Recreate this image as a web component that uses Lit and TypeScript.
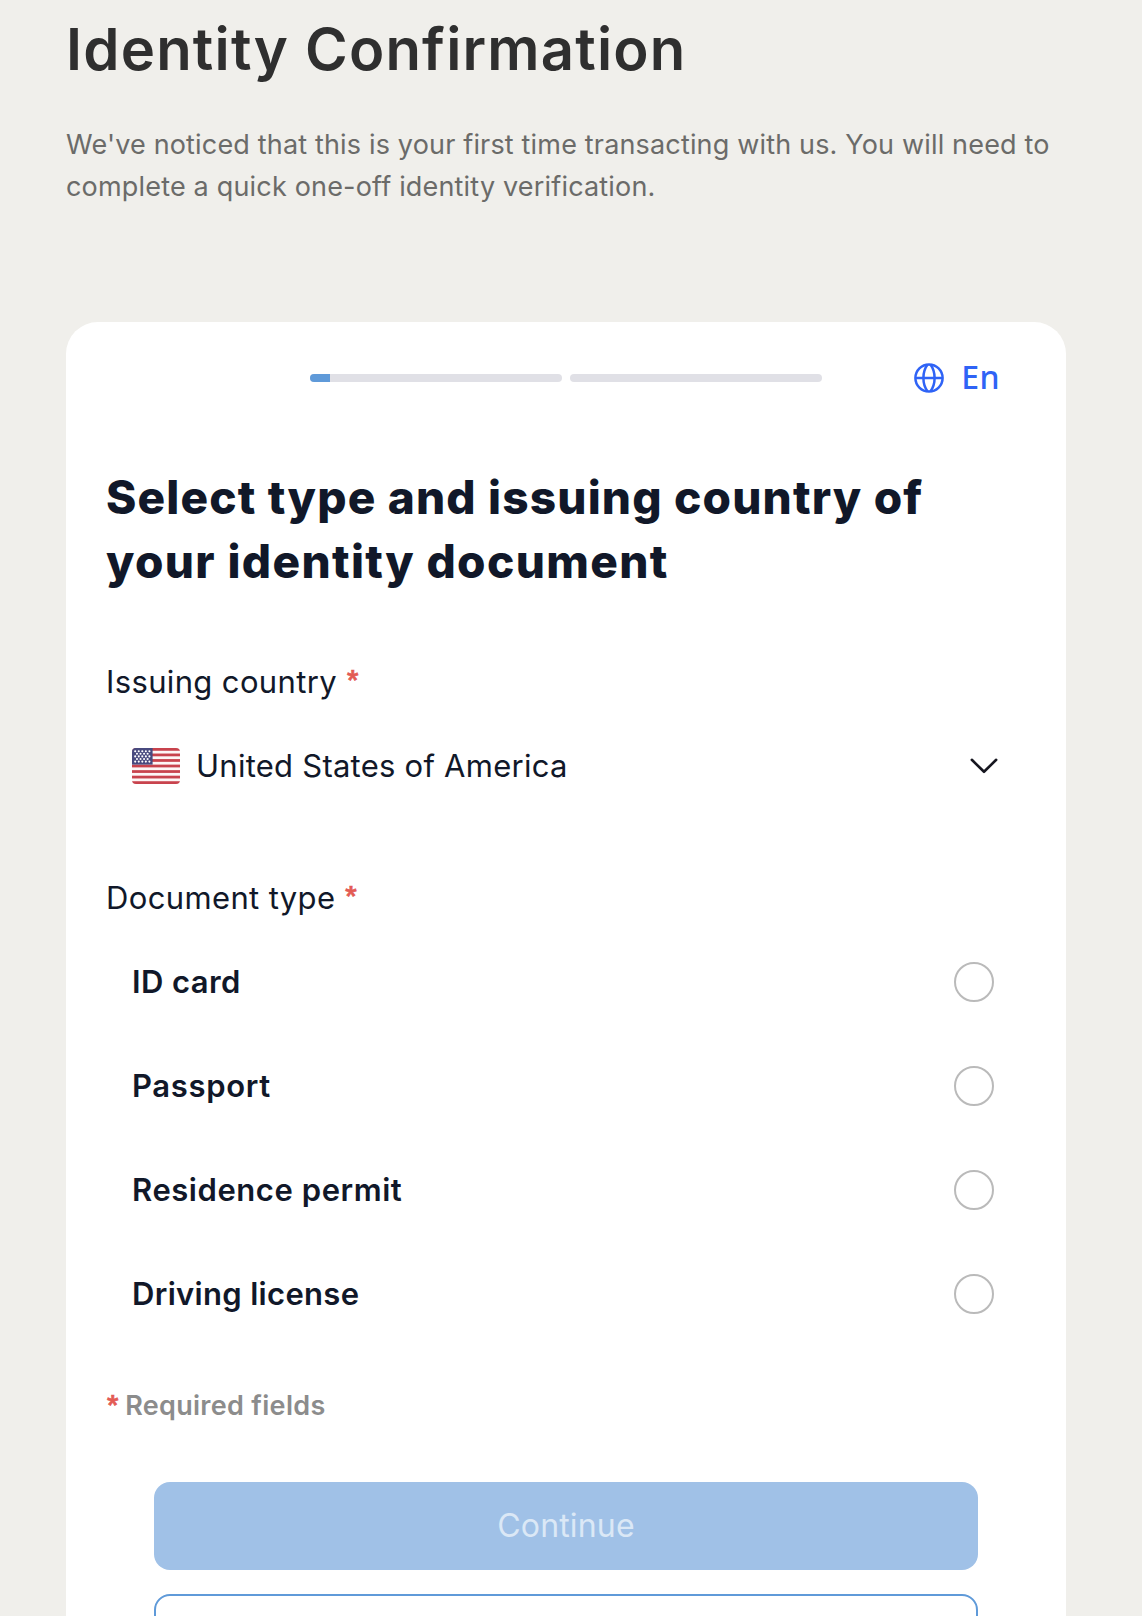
import { LitElement, html, svg, css } from "lit";
import { customElement, property, state } from "lit/decorators.js";

const NAVY = "#484a7f";
const RED = "#c8434d";

@customElement("us-flag")
class UsFlag extends LitElement {
  static styles = css`
    :host { display: block; width: 48px; height: 36px; flex: none; }
    svg { display: block; border-radius: 4px; }
  `;
  render() {
    const stripe = 36 / 13;
    const stars: [number, number][] = [];
    for (let r = 0; r < 5; r++) {
      const n = r % 2 ? 4 : 5;
      for (let i = 0; i < n; i++) stars.push([3.2 + i * 3.55 + (r % 2 ? 1.78 : 0), 3.2 + r * 2.6]);
    }
    return html`<svg width="48" height="36" viewBox="0 0 48 36">
      <rect width="48" height="36" fill="#fdf6f6" />
      ${[0, 1, 2, 3, 4, 5, 6].map((i) => svg`<rect y=${i * 2 * stripe} width="48" height=${stripe} fill=${RED} />`)}
      <rect width="20.6" height="16.6" fill=${NAVY} />
      ${stars.map(([x, y]) => svg`<circle cx=${x} cy=${y} r="1.05" fill="#fff" />`)}
    </svg>`;
  }
}

@customElement("step-bar")
class StepBar extends LitElement {
  @property({ type: Number }) progress = 0;
  static styles = css`
    :host { display: block; width: 252px; height: 8px; border-radius: 4px; background: #e0e0e6; overflow: hidden; }
    .fill { height: 8px; background: #5f9ad9; }
  `;
  render() {
    return html`<div class="fill" style="width:${this.progress}px"></div>`;
  }
}

@customElement("app-root")
export class AppRoot extends LitElement {
  @state() private selected = "";

  static styles = css`
    :host {
      display: block;
      box-sizing: border-box;
      height: 1616px;
      overflow: hidden;
      padding: 13px 76px 0 66px;
      background: #f0efeb;
      font-family: Inter, Roboto, sans-serif;
      color: #111829;
    }
    h1, h2, p { margin: 0; }
    h1 { font-size: 58px; font-weight: 600; line-height: 72px; letter-spacing: 1.2px; color: #2f2f2f; }
    .intro { margin-top: 39px; font-size: 27px; line-height: 42px; color: #6b6b69; white-space: nowrap; }
    .intro span { display: block; letter-spacing: 0.165px; }
    .intro span + span { letter-spacing: 0.18px; }
    .card { margin-top: 114px; height: 1400px; box-sizing: border-box; padding: 0 40px; border-radius: 32px; background: #fff; }
    .top { display: grid; grid-template-columns: 1fr auto 1fr; align-items: center; height: 112px; }
    .steps { display: flex; gap: 8px; }
    .lang { display: flex; align-items: center; justify-content: flex-end; gap: 17px; padding-right: 26px; color: #2f63f6;
      font: 500 32px/38px "Noto Sans", sans-serif; }
    .lang svg { display: block; }
    .lang span { padding-bottom: 2px; letter-spacing: 0.4px; }
    h2 { margin-top: 31px; font-size: 46px; line-height: 64px; font-weight: 800; white-space: nowrap; }
    h2 span { display: block; letter-spacing: 1.16px; }
    h2 span + span { letter-spacing: 1.34px; }
    .label { margin-top: 65px; height: 48px; font-size: 31px; line-height: 48px; letter-spacing: 0.36px; }
    .label.doc { margin-top: 60px; }
    .star { font: 900 24px/0 Roboto, sans-serif; letter-spacing: 0; vertical-align: 6px; margin-left: 10px; color: #e35b54; -webkit-text-stroke: 0.7px #e35b54; }
    .select { display: flex; align-items: center; margin-top: 12px; height: 96px; padding: 0 28px 0 26px; font-size: 31px; letter-spacing: 0.25px; }
    .country { margin-left: 16px; flex: 1; padding-bottom: 2px; }
    .chev { display: block; }
    .options { margin-top: 8px; }
    .option { display: flex; align-items: center; justify-content: space-between; height: 104px; padding: 0 32px 0 26px; font-size: 31px; font-weight: 600; }
    .name { padding-bottom: 2px; }
    .radio { width: 40px; height: 40px; box-sizing: border-box; border: 2px solid #bababa; border-radius: 50%; }
    .radio.on { border: 12px solid #5f9ad9; }
    .required { margin-top: 40px; font-size: 27px; line-height: 40px; font-weight: 600; letter-spacing: 0.3px; color: #8c8c8c; }
    .required .star { margin: 0 7px 0 1px; vertical-align: 3.5px; }
    .actions { display: flex; flex-direction: column; gap: 24px; margin: 56px 48px 0; }
    .btn { height: 88px; box-sizing: border-box; border-radius: 16px; text-align: center; font-size: 32px; line-height: 88px; letter-spacing: 0.15px; }
    .primary { background: #a0c1e7; color: #dbe8f6; }
    .outline { border: 2px solid #5f9ad9; }
  `;

  private options: [string, string][] = [
    ["ID card", "0.4px"],
    ["Passport", "0.65px"],
    ["Residence permit", "0.56px"],
    ["Driving license", "0.32px"],
  ];

  render() {
    return html`
      <h1>Identity Confirmation</h1>
      <p class="intro">
        <span>We've noticed that this is your first time transacting with us. You will need to</span>
        <span>complete a quick one-off identity verification.</span>
      </p>
      <section class="card">
        <div class="top">
          <div></div>
          <div class="steps"><step-bar .progress=${20}></step-bar><step-bar></step-bar></div>
          <div class="lang">
            <svg width="30" height="30" viewBox="0 0 30 30" fill="none" stroke="currentColor" stroke-width="2.5">
              <circle cx="15" cy="15" r="13.6" />
              <path d="M1.4 15H28.6M13.6 1.6C8 9 8 21 13.6 28.4M16.4 1.6C22 9 22 21 16.4 28.4" />
            </svg>
            <span>En</span>
          </div>
        </div>
        <h2><span>Select type and issuing country of</span><span>your identity document</span></h2>
        <div class="label">Issuing country<span class="star">*</span></div>
        <div class="select">
          <us-flag></us-flag>
          <span class="country">United States of America</span>
          <svg class="chev" width="28" height="16" viewBox="0 0 28 16" fill="none" stroke="#16161f" stroke-width="2.6" stroke-linecap="round" stroke-linejoin="round"><path d="M1.8 1.8 14 13.8 26.2 1.8" /></svg>
        </div>
        <div class="label doc">Document type<span class="star">*</span></div>
        <div class="options">
          ${this.options.map(
            ([name, spacing]) => html`<div class="option" @click=${() => (this.selected = name)}>
              <span class="name" style="letter-spacing:${spacing}">${name}</span>
              <span class="radio ${this.selected === name ? "on" : ""}"></span>
            </div>`
          )}
        </div>
        <div class="required"><span class="star">*</span>Required fields</div>
        <div class="actions">
          <div class="btn primary">Continue</div>
          <div class="btn outline"></div>
        </div>
      </section>
    `;
  }
}
